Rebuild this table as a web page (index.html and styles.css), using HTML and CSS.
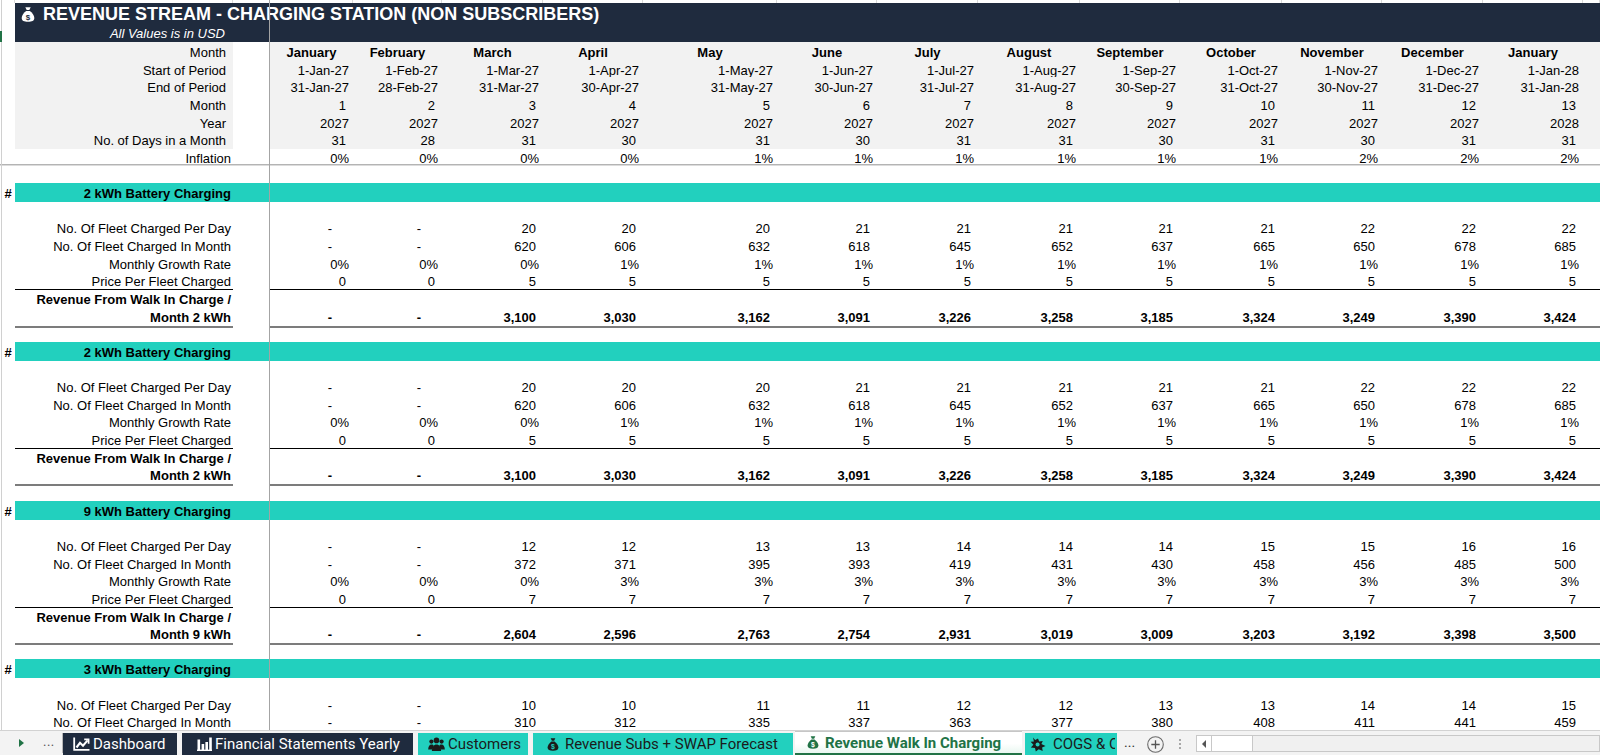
FILE: index.html
```html
<!DOCTYPE html>
<html lang="en">
<head>
<meta charset="utf-8">
<title>Revenue Walk In Charging</title>
<link rel="stylesheet" href="styles.css">
</head>
<body>
<div class="sheet">
  <div class="strip"><span></span><span></span><span></span><span></span><span></span><span></span><span></span><span></span><span></span><span></span><span></span><span></span><span></span><span></span><span></span><span></span><span></span></div>
  <div class="title">
    <div class="title-main">
      <svg class="bag" width="14" height="17" viewBox="0 0 14 16"><path d="M4.3 0.8h5.4l-1.4 2.8H5.7z" fill="#fff"/><path d="M5.2 4.4h3.6c2.9 2 4.5 4.7 4.5 7.1 0 2.7-2.3 3.8-6.3 3.8S0.7 14.2 0.7 11.5c0-2.4 1.6-5.1 4.5-7.1z" fill="#fff"/><text x="7" y="13.4" font-size="8" font-weight="bold" text-anchor="middle" fill="#1f2b3e" font-family="Liberation Sans, sans-serif">$</text></svg>
      <span>REVENUE STREAM - CHARGING STATION (NON SUBSCRIBERS)</span>
    </div>
    <div class="title-sub">All Values is in USD</div>
  </div>
  <div class="rows">
    <div class="row hdr"><span></span><span class="l">Month</span><span class="g"></span><span class="m">January</span><span class="m">February</span><span class="m">March</span><span class="m">April</span><span class="m">May</span><span class="m">June</span><span class="m">July</span><span class="m">August</span><span class="m">September</span><span class="m">October</span><span class="m">November</span><span class="m">December</span><span class="m">January</span><span></span></div>
    <div class="row hdr"><span></span><span class="l">Start of Period</span><span class="g"></span><span class="v p">1-Jan-27</span><span class="v p">1-Feb-27</span><span class="v p">1-Mar-27</span><span class="v p">1-Apr-27</span><span class="v p">1-May-27</span><span class="v p">1-Jun-27</span><span class="v p">1-Jul-27</span><span class="v p">1-Aug-27</span><span class="v p">1-Sep-27</span><span class="v p">1-Oct-27</span><span class="v p">1-Nov-27</span><span class="v p">1-Dec-27</span><span class="v p">1-Jan-28</span><span></span></div>
    <div class="row hdr"><span></span><span class="l">End of Period</span><span class="g"></span><span class="v p">31-Jan-27</span><span class="v p">28-Feb-27</span><span class="v p">31-Mar-27</span><span class="v p">30-Apr-27</span><span class="v p">31-May-27</span><span class="v p">30-Jun-27</span><span class="v p">31-Jul-27</span><span class="v p">31-Aug-27</span><span class="v p">30-Sep-27</span><span class="v p">31-Oct-27</span><span class="v p">30-Nov-27</span><span class="v p">31-Dec-27</span><span class="v p">31-Jan-28</span><span></span></div>
    <div class="row hdr"><span></span><span class="l">Month</span><span class="g"></span><span class="v">1</span><span class="v">2</span><span class="v">3</span><span class="v">4</span><span class="v">5</span><span class="v">6</span><span class="v">7</span><span class="v">8</span><span class="v">9</span><span class="v">10</span><span class="v">11</span><span class="v">12</span><span class="v">13</span><span></span></div>
    <div class="row hdr"><span></span><span class="l">Year</span><span class="g"></span><span class="v p">2027</span><span class="v p">2027</span><span class="v p">2027</span><span class="v p">2027</span><span class="v p">2027</span><span class="v p">2027</span><span class="v p">2027</span><span class="v p">2027</span><span class="v p">2027</span><span class="v p">2027</span><span class="v p">2027</span><span class="v p">2027</span><span class="v p">2028</span><span></span></div>
    <div class="row hdr"><span></span><span class="l">No. of Days in a Month</span><span class="g"></span><span class="v">31</span><span class="v">28</span><span class="v">31</span><span class="v">30</span><span class="v">31</span><span class="v">30</span><span class="v">31</span><span class="v">31</span><span class="v">30</span><span class="v">31</span><span class="v">30</span><span class="v">31</span><span class="v">31</span><span></span></div>
    <div class="row inf"><span></span><span class="l">Inflation</span><span class="g"></span><span class="v p">0%</span><span class="v p">0%</span><span class="v p">0%</span><span class="v p">0%</span><span class="v p">1%</span><span class="v p">1%</span><span class="v p">1%</span><span class="v p">1%</span><span class="v p">1%</span><span class="v p">1%</span><span class="v p">2%</span><span class="v p">2%</span><span class="v p">2%</span><span></span></div>
    <div class="row"></div>

    <div class="row sec"><span class="a">#</span><span class="l">2 kWh Battery Charging</span><span></span><span></span><span></span><span></span><span></span><span></span><span></span><span></span><span></span><span></span><span></span><span></span><span></span><span></span><span></span></div>
    <div class="row"></div>
    <div class="row"><span></span><span class="l">No. Of Fleet Charged Per Day</span><span class="g"></span><span class="v d">-</span><span class="v d">-</span><span class="v">20</span><span class="v">20</span><span class="v">20</span><span class="v">21</span><span class="v">21</span><span class="v">21</span><span class="v">21</span><span class="v">21</span><span class="v">22</span><span class="v">22</span><span class="v">22</span><span></span></div>
    <div class="row"><span></span><span class="l">No. Of Fleet Charged In Month</span><span class="g"></span><span class="v d">-</span><span class="v d">-</span><span class="v">620</span><span class="v">606</span><span class="v">632</span><span class="v">618</span><span class="v">645</span><span class="v">652</span><span class="v">637</span><span class="v">665</span><span class="v">650</span><span class="v">678</span><span class="v">685</span><span></span></div>
    <div class="row"><span></span><span class="l">Monthly Growth Rate</span><span class="g"></span><span class="v p">0%</span><span class="v p">0%</span><span class="v p">0%</span><span class="v p">1%</span><span class="v p">1%</span><span class="v p">1%</span><span class="v p">1%</span><span class="v p">1%</span><span class="v p">1%</span><span class="v p">1%</span><span class="v p">1%</span><span class="v p">1%</span><span class="v p">1%</span><span></span></div>
    <div class="row"><span></span><span class="l">Price Per Fleet Charged</span><span class="g"></span><span class="v">0</span><span class="v">0</span><span class="v">5</span><span class="v">5</span><span class="v">5</span><span class="v">5</span><span class="v">5</span><span class="v">5</span><span class="v">5</span><span class="v">5</span><span class="v">5</span><span class="v">5</span><span class="v">5</span><span></span></div>
    <div class="row r1"><span></span><span class="l">Revenue From Walk In Charge /</span><span class="g"></span><span class="v"></span><span class="v"></span><span class="v"></span><span class="v"></span><span class="v"></span><span class="v"></span><span class="v"></span><span class="v"></span><span class="v"></span><span class="v"></span><span class="v"></span><span class="v"></span><span class="v"></span><span class="v"></span></div>
    <div class="row r2"><span></span><span class="l">Month 2 kWh</span><span class="g"></span><span class="v d">-</span><span class="v d">-</span><span class="v">3,100</span><span class="v">3,030</span><span class="v">3,162</span><span class="v">3,091</span><span class="v">3,226</span><span class="v">3,258</span><span class="v">3,185</span><span class="v">3,324</span><span class="v">3,249</span><span class="v">3,390</span><span class="v">3,424</span><span class="v"></span></div>
    <div class="row"></div>

    <div class="row sec"><span class="a">#</span><span class="l">2 kWh Battery Charging</span><span></span><span></span><span></span><span></span><span></span><span></span><span></span><span></span><span></span><span></span><span></span><span></span><span></span><span></span><span></span></div>
    <div class="row"></div>
    <div class="row"><span></span><span class="l">No. Of Fleet Charged Per Day</span><span class="g"></span><span class="v d">-</span><span class="v d">-</span><span class="v">20</span><span class="v">20</span><span class="v">20</span><span class="v">21</span><span class="v">21</span><span class="v">21</span><span class="v">21</span><span class="v">21</span><span class="v">22</span><span class="v">22</span><span class="v">22</span><span></span></div>
    <div class="row"><span></span><span class="l">No. Of Fleet Charged In Month</span><span class="g"></span><span class="v d">-</span><span class="v d">-</span><span class="v">620</span><span class="v">606</span><span class="v">632</span><span class="v">618</span><span class="v">645</span><span class="v">652</span><span class="v">637</span><span class="v">665</span><span class="v">650</span><span class="v">678</span><span class="v">685</span><span></span></div>
    <div class="row"><span></span><span class="l">Monthly Growth Rate</span><span class="g"></span><span class="v p">0%</span><span class="v p">0%</span><span class="v p">0%</span><span class="v p">1%</span><span class="v p">1%</span><span class="v p">1%</span><span class="v p">1%</span><span class="v p">1%</span><span class="v p">1%</span><span class="v p">1%</span><span class="v p">1%</span><span class="v p">1%</span><span class="v p">1%</span><span></span></div>
    <div class="row"><span></span><span class="l">Price Per Fleet Charged</span><span class="g"></span><span class="v">0</span><span class="v">0</span><span class="v">5</span><span class="v">5</span><span class="v">5</span><span class="v">5</span><span class="v">5</span><span class="v">5</span><span class="v">5</span><span class="v">5</span><span class="v">5</span><span class="v">5</span><span class="v">5</span><span></span></div>
    <div class="row r1"><span></span><span class="l">Revenue From Walk In Charge /</span><span class="g"></span><span class="v"></span><span class="v"></span><span class="v"></span><span class="v"></span><span class="v"></span><span class="v"></span><span class="v"></span><span class="v"></span><span class="v"></span><span class="v"></span><span class="v"></span><span class="v"></span><span class="v"></span><span class="v"></span></div>
    <div class="row r2"><span></span><span class="l">Month 2 kWh</span><span class="g"></span><span class="v d">-</span><span class="v d">-</span><span class="v">3,100</span><span class="v">3,030</span><span class="v">3,162</span><span class="v">3,091</span><span class="v">3,226</span><span class="v">3,258</span><span class="v">3,185</span><span class="v">3,324</span><span class="v">3,249</span><span class="v">3,390</span><span class="v">3,424</span><span class="v"></span></div>
    <div class="row"></div>

    <div class="row sec"><span class="a">#</span><span class="l">9 kWh Battery Charging</span><span></span><span></span><span></span><span></span><span></span><span></span><span></span><span></span><span></span><span></span><span></span><span></span><span></span><span></span><span></span></div>
    <div class="row"></div>
    <div class="row"><span></span><span class="l">No. Of Fleet Charged Per Day</span><span class="g"></span><span class="v d">-</span><span class="v d">-</span><span class="v">12</span><span class="v">12</span><span class="v">13</span><span class="v">13</span><span class="v">14</span><span class="v">14</span><span class="v">14</span><span class="v">15</span><span class="v">15</span><span class="v">16</span><span class="v">16</span><span></span></div>
    <div class="row"><span></span><span class="l">No. Of Fleet Charged In Month</span><span class="g"></span><span class="v d">-</span><span class="v d">-</span><span class="v">372</span><span class="v">371</span><span class="v">395</span><span class="v">393</span><span class="v">419</span><span class="v">431</span><span class="v">430</span><span class="v">458</span><span class="v">456</span><span class="v">485</span><span class="v">500</span><span></span></div>
    <div class="row"><span></span><span class="l">Monthly Growth Rate</span><span class="g"></span><span class="v p">0%</span><span class="v p">0%</span><span class="v p">0%</span><span class="v p">3%</span><span class="v p">3%</span><span class="v p">3%</span><span class="v p">3%</span><span class="v p">3%</span><span class="v p">3%</span><span class="v p">3%</span><span class="v p">3%</span><span class="v p">3%</span><span class="v p">3%</span><span></span></div>
    <div class="row"><span></span><span class="l">Price Per Fleet Charged</span><span class="g"></span><span class="v">0</span><span class="v">0</span><span class="v">7</span><span class="v">7</span><span class="v">7</span><span class="v">7</span><span class="v">7</span><span class="v">7</span><span class="v">7</span><span class="v">7</span><span class="v">7</span><span class="v">7</span><span class="v">7</span><span></span></div>
    <div class="row r1"><span></span><span class="l">Revenue From Walk In Charge /</span><span class="g"></span><span class="v"></span><span class="v"></span><span class="v"></span><span class="v"></span><span class="v"></span><span class="v"></span><span class="v"></span><span class="v"></span><span class="v"></span><span class="v"></span><span class="v"></span><span class="v"></span><span class="v"></span><span class="v"></span></div>
    <div class="row r2"><span></span><span class="l">Month 9 kWh</span><span class="g"></span><span class="v d">-</span><span class="v d">-</span><span class="v">2,604</span><span class="v">2,596</span><span class="v">2,763</span><span class="v">2,754</span><span class="v">2,931</span><span class="v">3,019</span><span class="v">3,009</span><span class="v">3,203</span><span class="v">3,192</span><span class="v">3,398</span><span class="v">3,500</span><span class="v"></span></div>
    <div class="row"></div>

    <div class="row sec"><span class="a">#</span><span class="l">3 kWh Battery Charging</span><span></span><span></span><span></span><span></span><span></span><span></span><span></span><span></span><span></span><span></span><span></span><span></span><span></span><span></span><span></span></div>
    <div class="row"></div>
    <div class="row"><span></span><span class="l">No. Of Fleet Charged Per Day</span><span class="g"></span><span class="v d">-</span><span class="v d">-</span><span class="v">10</span><span class="v">10</span><span class="v">11</span><span class="v">11</span><span class="v">12</span><span class="v">12</span><span class="v">13</span><span class="v">13</span><span class="v">14</span><span class="v">14</span><span class="v">15</span><span></span></div>
    <div class="row"><span></span><span class="l">No. Of Fleet Charged In Month</span><span class="g"></span><span class="v d">-</span><span class="v d">-</span><span class="v">310</span><span class="v">312</span><span class="v">335</span><span class="v">337</span><span class="v">363</span><span class="v">377</span><span class="v">380</span><span class="v">408</span><span class="v">411</span><span class="v">441</span><span class="v">459</span><span></span></div>
  </div>

  <div class="tabs">
    <div class="nav"><span class="tri"></span><span class="dots">...</span></div>
    <div class="tab dark t-dash">
      <svg width="17" height="14" viewBox="0 0 17 14"><path d="M1.2 0.5V12.8H16.5" fill="none" stroke="#fff" stroke-width="1.8"/><path d="M3.5 10.5L7 5.8l3 3L14.6 3.4" fill="none" stroke="#fff" stroke-width="2.1"/><path d="M11.2 2.4H15.6V6.8" fill="none" stroke="#fff" stroke-width="1.7"/></svg>
      <span>Dashboard</span>
    </div>
    <div class="tab dark t-fin">
      <svg width="15" height="14" viewBox="0 0 15 14"><rect x="0.5" y="2.5" width="2.6" height="11" fill="#fff"/><rect x="4.6" y="7" width="2.6" height="6.5" fill="#fff"/><rect x="8.4" y="5" width="2.6" height="8.5" fill="#fff"/><rect x="12.2" y="0.5" width="2.6" height="13" fill="#fff"/><rect x="0" y="12.6" width="15" height="1.4" fill="#fff"/></svg>
      <span>Financial Statements Yearly</span>
    </div>
    <div class="tab teal t-cust">
      <svg width="17" height="14" viewBox="0 0 17 14"><circle cx="3.4" cy="4.6" r="2.1" fill="#1b1b1b"/><circle cx="13.6" cy="4.6" r="2.1" fill="#1b1b1b"/><circle cx="8.5" cy="3.4" r="2.8" fill="#1b1b1b"/><path d="M0.2 12.5c0-3 1.3-5 3.2-5s2.2.8 2.2.8L4.6 12.5z" fill="#1b1b1b"/><path d="M16.8 12.5c0-3-1.3-5-3.2-5s-2.2.8-2.2.8l1 4.2z" fill="#1b1b1b"/><path d="M3.9 14c0-4 1.9-6.6 4.6-6.6s4.6 2.6 4.6 6.6z" fill="#1b1b1b"/></svg>
      <span>Customers</span>
    </div>
    <div class="tab teal t-subs">
      <svg width="12" height="15" viewBox="0 0 14 16"><path d="M4.3 0.8h5.4l-1.4 2.8H5.7z" fill="#1b1b1b"/><path d="M5.2 4.4h3.6c2.9 2 4.5 4.7 4.5 7.1 0 2.7-2.3 3.8-6.3 3.8S0.7 14.2 0.7 11.5c0-2.4 1.6-5.1 4.5-7.1z" fill="#1b1b1b"/><text x="7" y="13.4" font-size="8" font-weight="bold" text-anchor="middle" fill="#22d0be" font-family="Liberation Sans, sans-serif">$</text></svg>
      <span>Revenue Subs + SWAP Forecast</span>
    </div>
    <div class="tab active t-walk">
      <svg width="12" height="15" viewBox="0 0 14 16"><path d="M4.3 0.8h5.4l-1.4 2.8H5.7z" fill="#217346"/><path d="M5.2 4.4h3.6c2.9 2 4.5 4.7 4.5 7.1 0 2.7-2.3 3.8-6.3 3.8S0.7 14.2 0.7 11.5c0-2.4 1.6-5.1 4.5-7.1z" fill="#217346"/><text x="7" y="13.4" font-size="8" font-weight="bold" text-anchor="middle" fill="#fff" font-family="Liberation Sans, sans-serif">$</text></svg>
      <span>Revenue Walk In Charging</span>
    </div>
    <div class="tab teal t-cogs">
      <svg width="16" height="15" viewBox="0 0 16 15"><path d="M3 0.5l2.2 2.6 2.8-1.6 1.2 3 3.6-.6-1.4 3.2L15.5 9l-3.4 1.4.6 3.6-4-1.8L5.8 14.5 5 11 .8 10.6 3.4 7.8.6 4.8l3.3-.4z" fill="#1b1b1b"/><circle cx="7.6" cy="7.4" r="2" fill="#22d0be"/></svg>
      <span class="clip">COGS &amp; O</span>
    </div>
    <div class="more">...</div>
    <div class="add"><svg width="17" height="17" viewBox="0 0 17 17"><circle cx="8.5" cy="8.5" r="7.8" fill="none" stroke="#6b6b6b" stroke-width="1.1"/><path d="M8.5 4.3v8.4M4.3 8.5h8.4" stroke="#555" stroke-width="1.3"/></svg></div>
    <div class="vdots"><span></span><span></span><span></span></div>
    <div class="sb"><span class="sb-arrow"><span class="sb-tri"></span></span><span class="sb-thumb"></span><span class="sb-track"></span></div>
  </div>
</div>
<div class="freeze-v"></div>
<div class="edge"></div>
<div class="sel"></div>
</body>
</html>
```

FILE: styles.css
```css
* { box-sizing: border-box; margin: 0; padding: 0; }
html, body { width: 1600px; height: 755px; overflow: hidden; background: #fff; }
body {
  position: relative;
  font-family: "Liberation Sans", Arial, sans-serif;
  font-size: 13px;
  color: #000;
}
.sheet { display: flex; flex-direction: column; height: 755px; }

.strip, .row {
  display: grid;
  grid-template-columns: 15px 218px 37px 83px 89px 101px 100px 134px 100px 101px 102px 100px 102px 100px 101px 100px 17px;
}
.strip { height: 3px; flex: none; }
.strip > span { border-right: 1px solid #dadada; }

.title {
  flex: none;
  margin-left: 15px;
  height: 39px;
  background: #1f2b3e;
  color: #fff;
}
.title-main {
  height: 21px;
  display: flex;
  align-items: center;
  padding-left: 6px;
  padding-top: 1px;
  gap: 8px;
  font-weight: bold;
  font-size: 18px;
  white-space: nowrap;
}
.bag { flex: none; }
.title-sub {
  width: 218px;
  height: 18px;
  line-height: 19px;
  text-align: right;
  padding-right: 8px;
  font-style: italic;
  font-size: 13px;
}

.rows { flex: 1; overflow: hidden; }
.row { height: 17.65px; line-height: 17px; white-space: nowrap; }
.row > span { display: block; padding-top: 2px; }
.l { text-align: right; padding-right: 2px; }
.v { text-align: right; padding-right: 7px; }
.v.p { padding-right: 4px; }
.v.d { padding-right: 21px; }
.m { text-align: center; font-weight: bold; }

.hdr .l { padding-right: 7px; }
.hdr > span:not(:first-child):not(.g) { background: #f2f2f2; }

.inf { border-bottom: 1px solid #b4b4b4; box-shadow: 0 1px 0 #dcdcdc; }

.sec > span:not(:first-child) { background: #22d0be; }
.sec .a { font-weight: bold; text-align: center; padding-left: 1px; }
.sec .l { font-weight: bold; }

.r1 .l, .r1 .v { border-top: 1px solid #000; font-weight: bold; padding-top: 1px; }
.r2 .l, .r2 .v { border-bottom: 2px solid #7c7c7c; font-weight: bold; }

/* tab bar */
.tabs {
  flex: none;
  height: 25px;
  display: flex;
  align-items: flex-end;
  background: #f3f3f3;
  border-top: 1px solid #d2d2d2;
  font-family: Roboto, "Noto Sans", sans-serif;
  font-size: 15px;
  white-space: nowrap;
  position: relative;
  z-index: 1;
}
.nav {
  width: 63px;
  height: 20px;
  margin-bottom: 2px;
  border-right: 1px solid #b8b8b8;
  display: flex;
  align-items: center;
}
.tri {
  margin-left: 19px;
  width: 0; height: 0;
  border-left: 5px solid #217346;
  border-top: 4px solid transparent;
  border-bottom: 4px solid transparent;
}
.dots { margin-left: 19px; color: #555; font-size: 13px; letter-spacing: 0.5px; line-height: 1; margin-top: -4px; }

.tab {
  height: 22px;
  display: flex;
  align-items: center;
  overflow: hidden;
  flex: none;
}
.tab svg { flex: none; }
.dark { background: #1f2b3e; color: #fff; }
.teal { background: #22d0be; color: #1b1b1b; }
.active {
  height: 24px;
  background: linear-gradient(#ffffff 55%, #e9f7f1);
  color: #217346;
  font-weight: bold;
  border-top: 1px solid #c6c6c6;
  border-bottom: 2px solid #217346;
}
.t-dash { width: 114px; padding-left: 10px; gap: 3px; }
.t-fin { width: 231px; margin-left: 5px; padding-left: 15px; gap: 3px; }
.t-cust { width: 110px; margin-left: 5px; padding-left: 10px; gap: 3px; }
.t-subs { width: 260px; margin-left: 5px; padding-left: 14px; gap: 6px; }
.t-walk { width: 227px; margin-left: 2px; padding-left: 12px; gap: 6px; }
.t-cogs { width: 92px; margin-left: 3px; padding-left: 5px; gap: 7px; }
.clip { overflow: hidden; width: 62px; flex: none; }

.more { margin-left: 7px; width: 14px; height: 22px; line-height: 18px; color: #333; font-size: 14px; }
.add { margin-left: 9px; width: 17px; height: 21px; display: flex; align-items: center; }
.vdots {
  margin-left: 15px;
  width: 3px;
  height: 22px;
  display: flex;
  flex-direction: column;
  justify-content: center;
  gap: 2px;
}
.vdots span { width: 2px; height: 2px; background: #a8a8a8; display: block; }
.sb {
  margin-left: 14px;
  margin-bottom: 3px;
  flex: 1;
  height: 17px;
  display: flex;
  border: 1px solid #c8c8c8;
  background: #f0f0f0;
}
.sb-arrow {
  width: 15px;
  background: #fff;
  border-right: 1px solid #c8c8c8;
  display: flex;
  align-items: center;
  justify-content: center;
}
.sb-tri {
  width: 0; height: 0;
  border-right: 4px solid #555;
  border-top: 4px solid transparent;
  border-bottom: 4px solid transparent;
}
.sb-thumb { width: 41px; background: #fff; border-right: 1px solid #c8c8c8; }
.sb-track { flex: 1; }

/* pane overlays */
.freeze-v {
  position: absolute;
  left: 269px;
  top: 0;
  height: 730px;
  width: 1px;
  background: #a4a4a4;
}
.edge {
  position: absolute;
  left: 1px;
  top: 0;
  height: 730px;
  width: 1px;
  background: #d0d0d0;
}
.sel {
  position: absolute;
  left: 0;
  top: 31px;
  width: 2px;
  height: 11px;
  background: #217346;
}
```
